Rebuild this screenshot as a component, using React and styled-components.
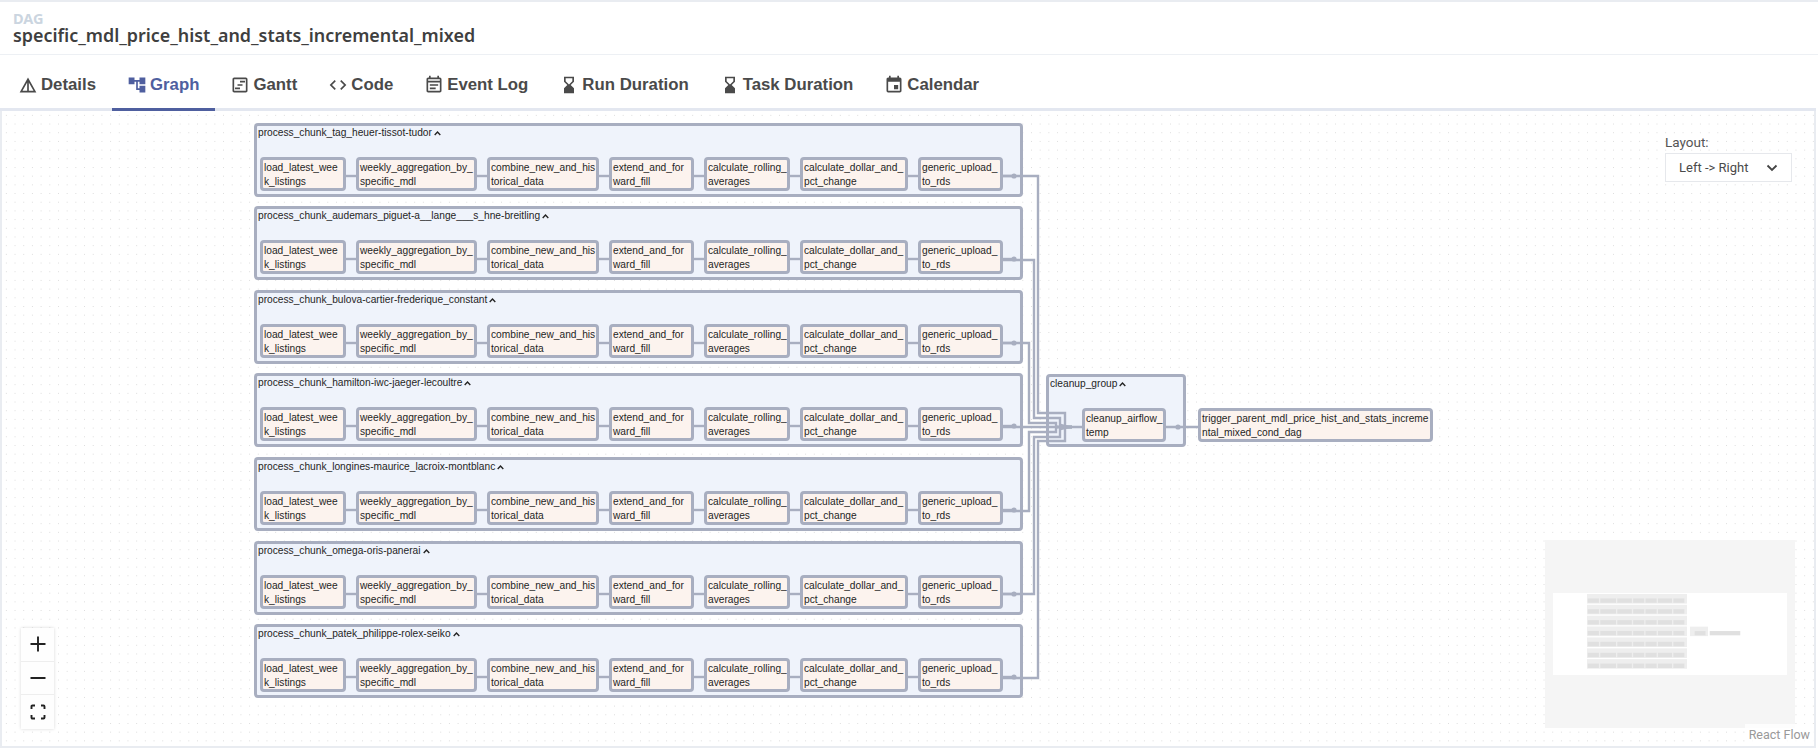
import React from "react";
import styled, { createGlobalStyle } from "styled-components";
import { MdDetails, MdAccountTree, MdOutlineViewTimeline, MdCode, MdOutlineEventNote, MdHourglassBottom, MdEvent } from "react-icons/md";

const ORIGIN_X = 2;
const ORIGIN_Y = 111;
const EDGE = "#a8aec0";

const Global = createGlobalStyle`
  html, body { margin: 0; padding: 0; background: #fff; }
  * { box-sizing: border-box; }
  body { font-family: "Liberation Sans", Arial, sans-serif; color: #2d3748; overflow: hidden; }
`;

const Page = styled.div`
  width: 1818px;
  height: 752px;
  display: flex;
  flex-direction: column;
  border-top: 2px solid #e9ecf1;
  padding-right: 2px;
`;

const Header = styled.header`
  height: 53px;
  flex: none;
  padding: 9px 13px 0;
  border-bottom: 1px solid #edf0f4;
  margin-right: -2px;
`;

const Eyebrow = styled.div`
  font-family: "Noto Sans", sans-serif;
  font-size: 14.5px;
  line-height: 15px;
  font-weight: 700;
  color: #cbd5e0;
`;

const Title = styled.h1`
  margin: 0;
  font-family: "Noto Sans", sans-serif;
  font-size: 17.9px;
  line-height: 19px;
  font-weight: 600;
  color: #3f3f3f;
`;

const TabBar = styled.nav`
  height: 56px;
  flex: none;
  display: flex;
  align-items: stretch;
  padding-left: 2.5px;
  border-bottom: 3px solid #e3e7f0;
`;

const Tab = styled.div`
  display: flex;
  align-items: center;
  gap: 3px;
  padding: 6px 15.5px 0;
  height: 56px;
  font-size: 16.8px;
  font-weight: 700;
  color: ${(p) => (p.$active ? "#4f5f9f" : "#4a4a4a")};
  border-bottom: ${(p) => (p.$active ? "3px solid #4f5f9f" : "3px solid transparent")};
  svg { width: 20px; height: 20px; flex: none; }
`;

const Canvas = styled.main`
  position: relative;
  height: 637px;
  flex: none;
  border: 2px solid #e9ecf1;
  border-top: 0;
  background-color: #fff;
  background-image: radial-gradient(#dcdcdc 0.6px, transparent 0.8px);
  background-size: 8.7px 8.7px;
  overflow: hidden;
`;

const Group = styled.section`
  position: absolute;
  left: ${(p) => p.$x - ORIGIN_X}px;
  top: ${(p) => p.$y - ORIGIN_Y}px;
  width: ${(p) => p.$w}px;
  height: ${(p) => p.$h}px;
  border: 3px solid ${EDGE};
  border-radius: 4px;
  background: #eff3fb;
  padding: 1px 0 0 1px;
`;

const GroupLabel = styled.div`
  display: flex;
  align-items: center;
  gap: 2px;
  height: 12px;
  font-size: 10.2px;
  line-height: 12px;
  color: #1f1f1f;
  white-space: nowrap;
  svg { width: 7px; height: 5px; flex: none; }
`;

const NodeRow = styled.div`
  display: flex;
  gap: 10px;
  margin: 18px 0 0 2px;
`;

const Node = styled.div`
  flex: none;
  width: ${(p) => p.$w}px;
  height: 34px;
  padding: 1px 0 0 1px;
  border: 3px solid ${EDGE};
  border-radius: 4px;
  background: #fcf3ee;
  font-size: 10.2px;
  line-height: 14px;
  color: #1f1f1f;
  white-space: nowrap;
  overflow: hidden;
`;

const FreeNode = styled(Node)`
  position: absolute;
  left: ${(p) => p.$x - ORIGIN_X}px;
  top: ${(p) => p.$y - ORIGIN_Y}px;
`;

const NodeLine = styled.div``;

const EdgeLayer = styled.svg`
  position: absolute;
  inset: 0;
  width: 100%;
  height: 100%;
  pointer-events: none;
`;

const LayoutPicker = styled.div`
  position: absolute;
  left: 1663px;
  top: 22px;
  width: 127px;
`;

const LayoutLabel = styled.div`
  font-family: Roboto, sans-serif;
  font-size: 13.5px;
  line-height: 18px;
  color: #555;
  margin-bottom: 2px;
`;

const LayoutSelect = styled.div`
  height: 29px;
  display: flex;
  align-items: center;
  justify-content: space-between;
  padding: 0 13px;
  border: 1px solid #e6e8ec;
  background: #fff;
  font-family: Roboto, sans-serif;
  font-size: 13px;
  color: #4a4a4a;
  svg { display: block; }
`;

const Controls = styled.div`
  position: absolute;
  left: 19px;
  top: 517px;
  width: 33px;
  display: flex;
  flex-direction: column;
  box-shadow: 0 0 3px rgba(0, 0, 0, 0.16);
`;

const ControlButton = styled.button`
  width: 33px;
  height: 33.5px;
  padding: 0;
  display: flex;
  align-items: center;
  justify-content: center;
  border: 0;
  border-bottom: 1px solid #eee;
  background: #fefefe;
  &:last-child { border-bottom: 0; }
  svg { display: block; }
`;

const MiniMap = styled.svg`
  position: absolute;
  left: 1543px;
  top: 429px;
  width: 250px;
  height: 188px;
`;

const Attribution = styled.div`
  position: absolute;
  right: 0;
  bottom: 1px;
  padding: 3px 4px;
  background: rgba(255, 255, 255, 0.8);
  font-family: Roboto, sans-serif;
  font-size: 12.5px;
  line-height: 15px;
  color: #999;
`;

const NODES = [
  { w: 86, lines: ["load_latest_wee", "k_listings"] },
  { w: 121, lines: ["weekly_aggregation_by_", "specific_mdl"] },
  { w: 112, lines: ["combine_new_and_his", "torical_data"] },
  { w: 85, lines: ["extend_and_for", "ward_fill"] },
  { w: 86, lines: ["calculate_rolling_", "averages"] },
  { w: 108, lines: ["calculate_dollar_and_", "pct_change"] },
  { w: 85, lines: ["generic_upload_", "to_rds"] },
];

const GROUPS = [
  { y: 123, label: "process_chunk_tag_heuer-tissot-tudor" },
  { y: 206, label: "process_chunk_audemars_piguet-a__lange___s_hne-breitling" },
  { y: 290, label: "process_chunk_bulova-cartier-frederique_constant" },
  { y: 373, label: "process_chunk_hamilton-iwc-jaeger-lecoultre" },
  { y: 457, label: "process_chunk_longines-maurice_lacroix-montblanc" },
  { y: 541, label: "process_chunk_omega-oris-panerai" },
  { y: 624, label: "process_chunk_patek_philippe-rolex-seiko" },
];

const GROUP_X = 254;
const GROUP_W = 769;
const GROUP_H = 74;

const nodeXs = NODES.reduce((acc, n, i) => {
  acc.push(i === 0 ? 260 : acc[i - 1] + NODES[i - 1].w + 10);
  return acc;
}, []);

const TABS = [
  { label: "Details", Icon: MdDetails },
  { label: "Graph", Icon: MdAccountTree, active: true },
  { label: "Gantt", Icon: MdOutlineViewTimeline },
  { label: "Code", Icon: MdCode },
  { label: "Event Log", Icon: MdOutlineEventNote },
  { label: "Run Duration", Icon: MdHourglassBottom },
  { label: "Task Duration", Icon: MdHourglassBottom },
  { label: "Calendar", Icon: MdEvent },
];

const Chevron = () => (
  <svg viewBox="0 0 10 7">
    <path d="M1 5.5 L5 1.5 L9 5.5" fill="none" stroke="#222" strokeWidth="2" />
  </svg>
);

const NodeText = ({ lines }) => lines.map((l) => <NodeLine key={l}>{l}</NodeLine>);

const CONVERGE = [
  { y: 176, vx: 1038, ry: 413, ex: 1065 },
  { y: 260, vx: 1034, ry: 418, ex: 1060 },
  { y: 343, vx: 1029, ry: 423, ex: 1056 },
  { y: 511, vx: 1029, ry: 432, ex: 1056 },
  { y: 594, vx: 1034, ry: 437, ex: 1060 },
  { y: 678, vx: 1038, ry: 441, ex: 1065 },
];

const Edges = () => (
  <EdgeLayer viewBox={`${ORIGIN_X} ${ORIGIN_Y} 1812 635`}>
    <g fill="none" stroke={EDGE} strokeWidth="2.4">
      {GROUPS.map((g) =>
        nodeXs.slice(1).map((x, i) => (
          <path key={g.y + "-" + i} d={`M${x - 10} ${g.y + 53} H${x}`} />
        ))
      )}
      {GROUPS.map((g) => (
        <path key={g.y} d={`M1003 ${g.y + 53} H1015`} />
      ))}
      {CONVERGE.map((c) => {
        const dir = c.ry < 427 ? 1 : -1;
        return (
          <path
            key={c.y}
            d={`M1003 ${c.y} H${c.vx} V${c.ry} H${c.ex} V${427 - dir * 2} Q${c.ex} 427 ${c.ex + 2} 427 H1072`}
          />
        );
      })}
      <path d="M1003 427 H1082" />
      <path d="M1165 427 H1198" />
    </g>
    <g fill={EDGE}>
      {GROUPS.map((g) => (
        <circle key={g.y} cx="1014" cy={g.y + 53} r="2.6" />
      ))}
      <circle cx="1178" cy="427" r="2.6" />
      <path d="M1073 427 L1060 423.5 L1062 427 L1060 430.5 Z" />
    </g>
  </EdgeLayer>
);

const mx = (x) => 42 + (x - GROUP_X) * 0.13;
const my = (y) => 54 + (y - 123) * 0.13;

const MiniMapView = () => (
  <MiniMap viewBox="0 0 250 188">
    <rect width="250" height="188" fill="#f5f5f5" />
    <rect x="8" y="53" width="234" height="82" fill="#fff" />
    {GROUPS.map((g) => (
      <g key={g.y}>
        <rect x={mx(GROUP_X)} y={my(g.y)} width={GROUP_W * 0.13} height={GROUP_H * 0.13} fill="#eeeeee" />
        {NODES.map((n, i) => (
          <rect key={i} x={mx(nodeXs[i])} y={my(g.y + 34)} width={n.w * 0.13} height={34 * 0.13} fill="#e0e0e0" />
        ))}
      </g>
    ))}
    <rect x={mx(1046)} y={my(374)} width={139 * 0.13} height={73 * 0.13} fill="#eeeeee" />
    <rect x={mx(1082)} y={my(408)} width={84 * 0.13} height={33 * 0.13} fill="#e0e0e0" />
    <rect x={mx(1198)} y={my(408)} width={235 * 0.13} height={33 * 0.13} fill="#e0e0e0" />
  </MiniMap>
);

export default function App() {
  return (
    <Page>
      <Global />
      <Header>
        <Eyebrow>DAG</Eyebrow>
        <Title>specific_mdl_price_hist_and_stats_incremental_mixed</Title>
      </Header>
      <TabBar>
        {TABS.map(({ label, Icon, active }) => (
          <Tab key={label} $active={active}>
            <Icon />
            {label}
          </Tab>
        ))}
      </TabBar>
      <Canvas>
        {GROUPS.map((g) => (
          <Group key={g.y} $x={GROUP_X} $y={g.y} $w={GROUP_W} $h={GROUP_H}>
            <GroupLabel>
              {g.label}
              <Chevron />
            </GroupLabel>
            <NodeRow>
              {NODES.map((n) => (
                <Node key={n.lines[0]} $w={n.w}>
                  <NodeText lines={n.lines} />
                </Node>
              ))}
            </NodeRow>
          </Group>
        ))}
        <Group $x={1046} $y={374} $w={140} $h={73}>
          <GroupLabel>
            cleanup_group
            <Chevron />
          </GroupLabel>
        </Group>
        <FreeNode $x={1082} $y={408} $w={84}>
          <NodeText lines={["cleanup_airflow_", "temp"]} />
        </FreeNode>
        <FreeNode $x={1198} $y={408} $w={235}>
          <NodeText lines={["trigger_parent_mdl_price_hist_and_stats_increme", "ntal_mixed_cond_dag"]} />
        </FreeNode>
        <Edges />
        <LayoutPicker>
          <LayoutLabel>Layout:</LayoutLabel>
          <LayoutSelect>
            Left -&gt; Right
            <svg width="12" height="8" viewBox="0 0 12 8"><path d="M1.5 1.5 L6 6 L10.5 1.5" fill="none" stroke="#444" strokeWidth="1.8" /></svg>
          </LayoutSelect>
        </LayoutPicker>
        <Controls>
          <ControlButton aria-label="zoom in">
            <svg width="16" height="16" viewBox="0 0 16 16"><path d="M8 0.5 V15.5 M0.5 8 H15.5" stroke="#222" strokeWidth="1.9" /></svg>
          </ControlButton>
          <ControlButton aria-label="zoom out">
            <svg width="16" height="16" viewBox="0 0 16 16"><path d="M0.5 8 H15.5" stroke="#222" strokeWidth="2" /></svg>
          </ControlButton>
          <ControlButton aria-label="fit view">
            <svg width="16" height="16" viewBox="0 0 16 16"><path d="M1.5 5 V2.5 Q1.5 1.5 2.5 1.5 H5 M11 1.5 H13.5 Q14.5 1.5 14.5 2.5 V5 M14.5 11 V13.5 Q14.5 14.5 13.5 14.5 H11 M5 14.5 H2.5 Q1.5 14.5 1.5 13.5 V11" fill="none" stroke="#222" strokeWidth="1.9" /></svg>
          </ControlButton>
        </Controls>
        <MiniMapView />
        <Attribution>React Flow</Attribution>
      </Canvas>
    </Page>
  );
}
